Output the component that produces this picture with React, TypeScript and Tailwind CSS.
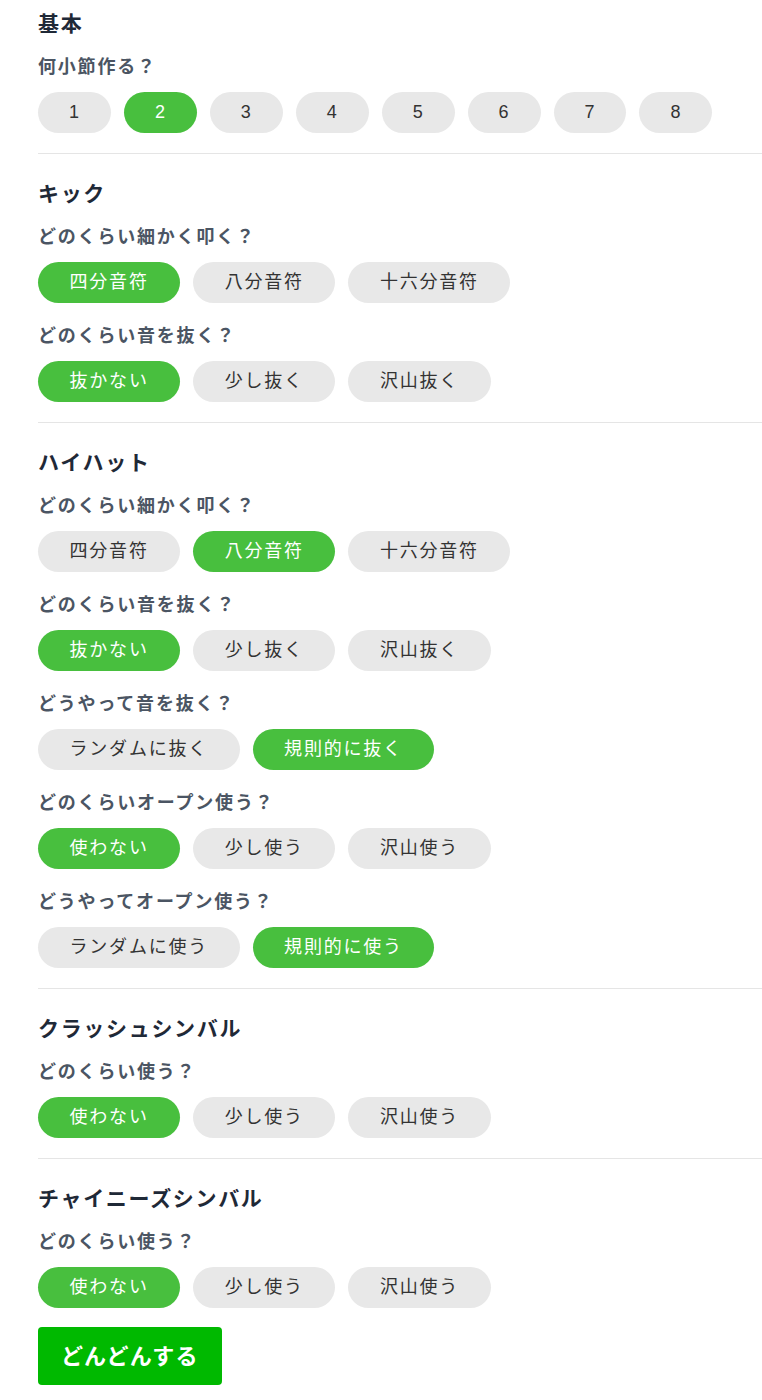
import { useState } from "react";

type Question = {
  label: string;
  options: string[];
  initial: number;
};

type Section = {
  title: string;
  questions: Question[];
};

const sections: Section[] = [
  {
    title: "基本",
    questions: [{ label: "何小節作る？", options: ["1", "2", "3", "4", "5", "6", "7", "8"], initial: 1 }],
  },
  {
    title: "キック",
    questions: [
      { label: "どのくらい細かく叩く？", options: ["四分音符", "八分音符", "十六分音符"], initial: 0 },
      { label: "どのくらい音を抜く？", options: ["抜かない", "少し抜く", "沢山抜く"], initial: 0 },
    ],
  },
  {
    title: "ハイハット",
    questions: [
      { label: "どのくらい細かく叩く？", options: ["四分音符", "八分音符", "十六分音符"], initial: 1 },
      { label: "どのくらい音を抜く？", options: ["抜かない", "少し抜く", "沢山抜く"], initial: 0 },
      { label: "どうやって音を抜く？", options: ["ランダムに抜く", "規則的に抜く"], initial: 1 },
      { label: "どのくらいオープン使う？", options: ["使わない", "少し使う", "沢山使う"], initial: 0 },
      { label: "どうやってオープン使う？", options: ["ランダムに使う", "規則的に使う"], initial: 1 },
    ],
  },
  {
    title: "クラッシュシンバル",
    questions: [{ label: "どのくらい使う？", options: ["使わない", "少し使う", "沢山使う"], initial: 0 }],
  },
  {
    title: "チャイニーズシンバル",
    questions: [{ label: "どのくらい使う？", options: ["使わない", "少し使う", "沢山使う"], initial: 0 }],
  },
];

function cx(...names: string[]) {
  return names.join(" ");
}

function QuestionRow({ q, first }: { q: Question; first: boolean }) {
  const [selected, setSelected] = useState(q.initial);
  const numeric = /^\d+$/.test(q.options[0]);

  return (
    <div className={first ? "mt-[15px]" : "mt-5"}>
      <div className="text-[18px] leading-[26px] font-bold tracking-[0.1em] text-[#4b5563]">{q.label}</div>
      <div className="mt-3 flex flex-wrap gap-[13px]">
        {q.options.map((opt, i) => (
          <button
            key={opt}
            onClick={() => setSelected(i)}
            className={cx(
              "h-[41px] rounded-full text-[18px] leading-[41px]",
              numeric ? "px-[31px] tracking-[0.05em]" : "px-[31.5px] tracking-[0.1em]",
              i === selected ? "bg-[#48bf3e] text-white" : "bg-[#e8e8e8] text-[#333333]"
            )}
          >
            {opt}
          </button>
        ))}
      </div>
    </div>
  );
}

export default function App() {
  return (
    <div
      className="min-h-[1400px] bg-white pl-[38px]"
      style={{ fontFamily: '"Liberation Sans", "Noto Sans CJK JP", sans-serif' }}
    >
      {sections.map((s, si) => {
        const last = si === sections.length - 1;
        return (
          <section
            key={s.title}
            className={cx(
              si === 0 ? "pt-[9px]" : "pt-[25px]",
              last ? "pb-[19px]" : "border-b border-[#e5e5e5] pb-5"
            )}
          >
            <h2 className="text-[21px] leading-[30px] font-bold tracking-[0.08em] text-[#1f2937]">{s.title}</h2>
            {s.questions.map((q, qi) => (
              <QuestionRow key={q.label + qi} q={q} first={qi === 0} />
            ))}
          </section>
        );
      })}
      <button className="h-[58px] rounded-[4px] bg-[#00b900] px-[23px] text-[22px] font-bold tracking-[0.05em] text-white">
        どんどんする
      </button>
    </div>
  );
}
